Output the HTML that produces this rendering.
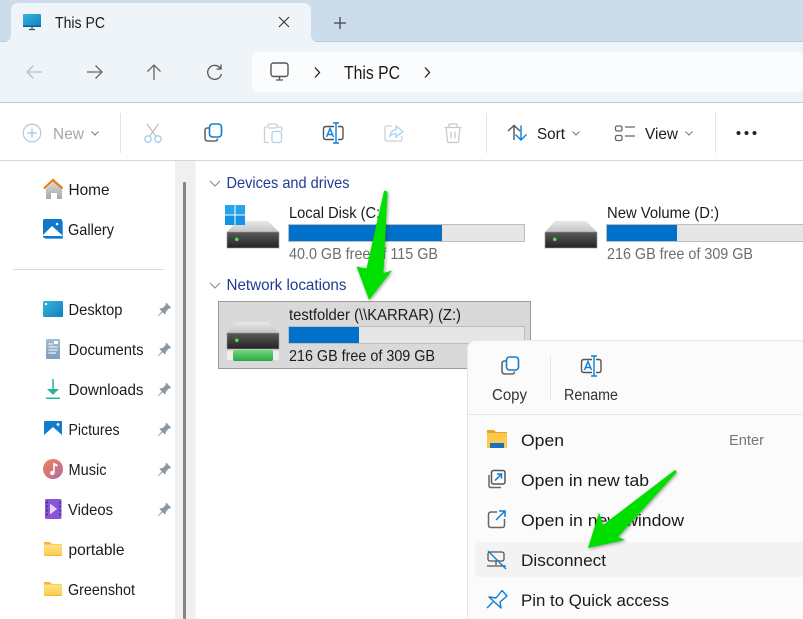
<!DOCTYPE html>
<html><head><meta charset="utf-8"><style>
html,body{margin:0;padding:0;background:#fff;width:803px;height:619px;overflow:hidden}
svg{display:block;font-family:"Liberation Sans",sans-serif}
text{fill:#1b1b1b;font-size:16px}
</style></head><body>
<svg width="803" height="619" viewBox="0 0 803 619" xmlns="http://www.w3.org/2000/svg">
<defs>
<linearGradient id="dk" x1="0" y1="0" x2="0" y2="1"><stop offset="0" stop-color="#5a5a5a"/><stop offset="1" stop-color="#232323"/></linearGradient>
<linearGradient id="tp" x1="0" y1="0" x2="0" y2="1"><stop offset="0" stop-color="#e8e8e8"/><stop offset="1" stop-color="#c4c4c4"/></linearGradient>
<linearGradient id="sc" x1="0" y1="0" x2="1" y2="1"><stop offset="0" stop-color="#35b6dc"/><stop offset="1" stop-color="#0f7fc0"/></linearGradient>
<linearGradient id="fd" x1="0" y1="0" x2="0" y2="1"><stop offset="0" stop-color="#ffe28a"/><stop offset="1" stop-color="#fbcb52"/></linearGradient>
<linearGradient id="hm" x1="0" y1="0" x2="0" y2="1"><stop offset="0" stop-color="#d8d8d8"/><stop offset="1" stop-color="#a8a8a8"/></linearGradient>
<linearGradient id="ms" x1="0" y1="0" x2="1" y2="1"><stop offset="0" stop-color="#ee8550"/><stop offset="1" stop-color="#b566a8"/></linearGradient>
<linearGradient id="dc" x1="0" y1="0" x2="0" y2="1"><stop offset="0" stop-color="#a5bdd4"/><stop offset="1" stop-color="#7d9dbd"/></linearGradient>
<linearGradient id="gr" x1="0" y1="0" x2="0" y2="1"><stop offset="0" stop-color="#72d77f"/><stop offset="1" stop-color="#2aa845"/></linearGradient>
<filter id="sh" x="-30%" y="-30%" width="160%" height="160%"><feDropShadow dx="1" dy="1" stdDeviation="1.500" flood-color="#000" flood-opacity=".4"/></filter>
<g id="drive"><path d="M10 0H41L52 11H0Z" fill="url(#tp)"/><rect x="0" y="11" width="52" height="16" fill="url(#dk)" stroke="#9a9a9a" stroke-width=".6"/><rect x="8" y="16.500" width="3.600" height="3.600" rx="1.800" fill="#4fe04f"/></g>
<g id="pin"><g transform="rotate(45) scale(.85)" fill="#8f99a2"><path d="M-.8 2H.8L.4 10H-.4Z"/><path d="M-4-8H4V-6H2.800V-1L5 3H-5L-2.800-1V-6H-4Z"/></g></g>
<g id="copy" fill="none" stroke-width="1.600"><path d="M-4-6H-6.500Q-9-6-9-3.500V4Q-9 7-6 7H1Q3.500 7 3.500 4.500" stroke="#666"/><rect x="-4.500" y="-10" width="12" height="13" rx="3" stroke="#0b7ed6" fill="#fff"/></g>
<g id="ren" fill="none" stroke-width="1.400"><path d="M1-6.500H-7Q-9.500-6.500-9.500-4V4Q-9.500 6.500-7 6.500H1M5-6.500H8Q10-6.500 10-4V4Q10 6.500 8 6.500H5" stroke="#555"/><path d="M3-10V10M0-10H6M0 10H6" stroke="#0b7ed6"/><path d="M-6.500 4L-3-4.500L.5 4M-5.500 1.500H-.5" stroke="#0b7ed6"/></g>
<g id="chev" fill="none" stroke="#777" stroke-width="1"><path d="M-3.500-1.500L0 2L3.500-1.500"/></g>
</defs>

<!-- title bar -->
<rect width="803" height="42" fill="#cbdcea"/>
<rect y="41" width="803" height="1" fill="#b7cadb"/>
<path d="M5 42Q11 41 11 35V11Q11 3 19 3H303Q311 3 311 11V35Q311 41 317 42Z" fill="#eff4f9"/>
<rect x="23" y="14" width="18" height="13" rx="1" fill="url(#sc)"/><rect x="23" y="25.500" width="18" height="1.500" fill="#0d5d8e"/><path d="M29 29.500H35M32 27V29.500" stroke="#32536f" stroke-width="1.200"/>
<text x="55" y="28" style="font-size:16px" textLength="50" lengthAdjust="spacingAndGlyphs">This PC</text>
<path d="M279 17L289 27M289 17L279 27" stroke="#333" stroke-width="1.100"/>
<path d="M340 17V29M334 23H346" stroke="#444" stroke-width="1.300"/>

<!-- nav row -->
<rect y="42" width="803" height="60" fill="#eff4f9"/>
<rect y="102" width="803" height="1" fill="#bccad6"/>
<g fill="none" stroke-width="1.300">
<path d="M42 72H27M33.500 65.500L27 72L33.500 78.500" stroke="#b9bfc4"/>
<path d="M87 72H102M95.500 65.500L102 72L95.500 78.500" stroke="#666"/>
<path d="M154 80V65M147.500 71.500L154 65L160.500 71.500" stroke="#666"/>
<path d="M220.500 68.500A7 7 0 1 0 221.500 74M221 64.500V69H216.500" stroke="#555"/>
</g>
<rect x="252" y="52" width="551" height="40" rx="5" fill="#fbfcfe"/>
<rect x="271" y="63" width="17" height="13.500" rx="2.500" fill="none" stroke="#555" stroke-width="1.400"/><path d="M276 80H283M279.500 77V80" stroke="#555" stroke-width="1.300"/>
<path d="M315 67.500L319.500 72.500L315 77.500M425 67.500L429.500 72.500L425 77.500" fill="none" stroke="#222" stroke-width="1.300"/>
<text x="344" y="79" style="font-size:18px" textLength="56" lengthAdjust="spacingAndGlyphs">This PC</text>

<!-- command bar -->
<circle cx="32" cy="133" r="8.800" fill="none" stroke="#c8c8c8" stroke-width="1.300"/><path d="M32 128.500V137.500M27.500 133H36.500" stroke="#92c5ee" stroke-width="1.200"/>
<text x="53" y="139" style="fill:#a6a6a6" textLength="31" lengthAdjust="spacingAndGlyphs">New</text>
<use href="#chev" x="95" y="133"/>
<rect x="120" y="113" width="1" height="40" fill="#e3e3e3"/>
<g fill="none"><path d="M147 124L156.500 137M158.500 124L149 137" stroke="#bdbdbd" stroke-width="1.200"/><circle cx="148" cy="139" r="3.200" stroke="#9fcdf0" stroke-width="1.300"/><circle cx="158" cy="139" r="3.200" stroke="#9fcdf0" stroke-width="1.300"/></g>
<use href="#copy" x="214" y="134"/>
<g fill="none" stroke-width="1.300"><path d="M267 127H265.500Q264.500 127 264.500 129V141Q264.500 142.500 266 142.500H269M277 127H280Q282 127 282 129V131" stroke="#cfcfcf"/><rect x="268" y="124" width="9" height="4" rx="1.500" stroke="#cfcfcf"/><rect x="272" y="131.500" width="9.500" height="11" rx="2" stroke="#a6d2f2"/></g>
<use href="#ren" x="333" y="133"/>
<g fill="none" stroke-width="1.300"><path d="M392 126H387Q385 126 385 128V139Q385 141 387 141H400Q402 141 402 139V136" stroke="#cfcfcf"/><path d="M390 136Q391 130 396 129.500V126L403 131.500L396 137V133.500Q392 134 390 136Z" stroke="#a6d2f2"/></g>
<g fill="none" stroke="#c9c9c9" stroke-width="1.300"><path d="M444.500 127.500H461.500M449 127V125Q449 124 450 124H456Q457 124 457 125V127M446 128L447.500 141Q447.500 142.500 449 142.500H457Q458.500 142.500 458.500 141L460 128M451 131.500V138.500M455 131.500V138.500"/></g>
<rect x="486" y="113" width="1" height="40" fill="#e3e3e3"/>
<g fill="none" stroke-width="1.400"><path d="M514 140V126M508 131L514 125.500L520 131" stroke="#555"/><path d="M521 125.500V140M515.500 134.500L521 140L526.500 134.500" stroke="#0b7ed6"/></g>
<text x="537" y="139" textLength="28" lengthAdjust="spacingAndGlyphs">Sort</text>
<use href="#chev" x="576" y="133"/>
<g fill="none" stroke="#666" stroke-width="1.300"><rect x="615.500" y="126" width="6.500" height="5" rx="1.500"/><rect x="615.500" y="135.500" width="6.500" height="5" rx="1.500"/><path d="M625 127H635M625 136H635"/></g>
<text x="645" y="139" textLength="33" lengthAdjust="spacingAndGlyphs">View</text>
<use href="#chev" x="689" y="133"/>
<rect x="715" y="113" width="1" height="40" fill="#e3e3e3"/>
<circle cx="738.500" cy="133" r="2" fill="#222"/><circle cx="746.500" cy="133" r="2" fill="#222"/><circle cx="754.500" cy="133" r="2" fill="#222"/>
<rect y="160" width="803" height="1" fill="#c8d8e6"/>

<!-- sidebar -->
<rect x="175" y="161" width="20" height="458" fill="#f0f0f0"/>
<rect x="195" y="161" width="1" height="458" fill="#f7f7f7"/>
<rect x="183" y="182" width="3" height="437" rx="1" fill="#858585"/>
<path d="M46 189V199H51V193H57V199H62V189L54 181Z" fill="url(#hm)"/><path d="M44 188.500L53 180L62.500 188.500" fill="none" stroke="#e87a1a" stroke-width="2.200"/>
<text x="68.500" y="195" textLength="41" lengthAdjust="spacingAndGlyphs">Home</text>
<rect x="45" y="221" width="18" height="18" rx="1" fill="#5aa4df"/><rect x="43" y="219" width="19" height="19" rx="1.500" fill="#0f78cc"/><path d="M43 235L52 226L62 235V236H43Z" fill="#fff"/><circle cx="57" cy="224" r="1.300" fill="#fff"/>
<text x="68" y="235" textLength="46" lengthAdjust="spacingAndGlyphs">Gallery</text>
<rect x="13" y="269" width="151" height="1" fill="#dbdbdb"/>

<rect x="43" y="301" width="20" height="16" rx="1" fill="url(#sc)"/><rect x="45" y="303" width="2" height="2" fill="#fff"/>
<text x="68.500" y="315" textLength="54" lengthAdjust="spacingAndGlyphs">Desktop</text>
<use href="#pin" x="164" y="310"/>
<rect x="46" y="339" width="14" height="20" rx="1" fill="url(#dc)"/><path d="M48.500 344H53M48.500 347H57.500M48.500 350H57.500M48.500 353H56" stroke="#fff" stroke-width=".9"/><rect x="54" y="341" width="4" height="3" fill="#fff"/>
<text x="68.500" y="355" textLength="75" lengthAdjust="spacingAndGlyphs">Documents</text>
<use href="#pin" x="164" y="350"/>
<path d="M53 379V392" stroke="#31b8a0" stroke-width="1.600"/><path d="M47 389H59L53 395Z" fill="#25b795"/><rect x="46" y="397.500" width="14" height="1.500" fill="#25b795"/>
<text x="68.500" y="395" textLength="75" lengthAdjust="spacingAndGlyphs">Downloads</text>
<use href="#pin" x="164" y="390"/>
<rect x="44" y="421" width="18" height="17.500" rx="1" fill="#0f7ccc"/><path d="M44 435L53 427L62 435V438.500H44Z" fill="#fff"/><circle cx="58" cy="424.500" r="1.400" fill="#fff"/>
<text x="68.500" y="435" textLength="51" lengthAdjust="spacingAndGlyphs">Pictures</text>
<use href="#pin" x="164" y="430"/>
<circle cx="53" cy="469" r="10" fill="url(#ms)"/><path d="M54 463V472.500" stroke="#fff" stroke-width="1.600"/><circle cx="52.300" cy="473" r="2.200" fill="#fff"/><path d="M54 463L57.500 464.500V466.500L54 465.500Z" fill="#fff"/>
<text x="68.500" y="475" textLength="38" lengthAdjust="spacingAndGlyphs">Music</text>
<use href="#pin" x="164" y="470"/>
<rect x="45" y="499" width="16.500" height="20" rx="1.500" fill="#8a54d8"/><path d="M50 503.500V514.500L57 509Z" fill="#e4d8fa"/><path d="M47 501.500V517.500M60 501.500V517.500" stroke="#3d2a78" stroke-width="1.500" stroke-dasharray="2 2"/>
<text x="68" y="515" textLength="45" lengthAdjust="spacingAndGlyphs">Videos</text>
<use href="#pin" x="164" y="510"/>
<path d="M44 542H50L52 544H62V556H44Z" fill="#f4b92e"/><rect x="44" y="544.500" width="18" height="10.500" fill="url(#fd)"/>
<text x="68.500" y="555" textLength="56" lengthAdjust="spacingAndGlyphs">portable</text>
<path d="M44 582H50L52 584H62V596H44Z" fill="#f4b92e"/><rect x="44" y="584.500" width="18" height="10.500" fill="url(#fd)"/>
<text x="68" y="595" textLength="67" lengthAdjust="spacingAndGlyphs">Greenshot</text>

<!-- content -->
<path d="M210 181L215 186L220 181M210 283L215 288L220 283" fill="none" stroke="#888" stroke-width="1"/>
<text x="226.500" y="188" style="fill:#1f3a93" textLength="123" lengthAdjust="spacingAndGlyphs">Devices and drives</text>
<text x="226.500" y="290" style="fill:#1f3a93" textLength="120" lengthAdjust="spacingAndGlyphs">Network locations</text>

<use href="#drive" x="227" y="221"/>
<rect x="225" y="205" width="9.500" height="9.500" fill="#27a3ea"/><rect x="235.500" y="205" width="9.500" height="9.500" fill="#27a3ea"/><rect x="225" y="215.500" width="9.500" height="9.500" fill="#1394e5"/><rect x="235.500" y="215.500" width="9.500" height="9.500" fill="#1394e5"/>
<text x="289" y="218" textLength="96" lengthAdjust="spacingAndGlyphs">Local Disk (C:)</text>
<rect x="288.500" y="224.500" width="236" height="17" fill="#e6e6e6" stroke="#bcbcbc"/><rect x="289" y="225" width="153" height="16" fill="#0070c8"/>
<text x="289" y="259" style="fill:#6d6d6d" textLength="149" lengthAdjust="spacingAndGlyphs">40.0 GB free of 115 GB</text>

<use href="#drive" x="545" y="221"/>
<text x="607" y="218" textLength="112" lengthAdjust="spacingAndGlyphs">New Volume (D:)</text>
<rect x="606.500" y="224.500" width="200" height="17" fill="#e6e6e6" stroke="#bcbcbc"/><rect x="607" y="225" width="70" height="16" fill="#0070c8"/>
<text x="607" y="259" style="fill:#6d6d6d" textLength="146" lengthAdjust="spacingAndGlyphs">216 GB free of 309 GB</text>

<rect x="218.500" y="301.500" width="312" height="67" fill="#d9d9d9" stroke="#9a9a9a"/>
<use href="#drive" x="227" y="322"/>
<rect x="227" y="351" width="52" height="9" fill="#efefef" rx="2"/><rect x="233" y="350" width="40" height="11" fill="url(#gr)" rx="2"/>
<text x="289" y="320" textLength="172" lengthAdjust="spacingAndGlyphs">testfolder (\\KARRAR) (Z:)</text>
<rect x="288.500" y="326.500" width="236" height="17" fill="#e6e6e6" stroke="#bcbcbc"/><rect x="289" y="327" width="70" height="16" fill="#0070c8"/>
<text x="289" y="361" textLength="146" lengthAdjust="spacingAndGlyphs">216 GB free of 309 GB</text>

<!-- context menu -->
<rect x="467.500" y="340.500" width="350" height="300" rx="8" fill="#fbfbfb" stroke="#e6e6e6"/>
<use href="#copy" x="511" y="367"/>
<text x="492" y="400" style="font-size:15.500px;fill:#333" textLength="35" lengthAdjust="spacingAndGlyphs">Copy</text>
<rect x="550" y="355" width="1" height="45" fill="#e8e8e8"/>
<use href="#ren" x="591" y="366"/>
<text x="564" y="400" style="font-size:15.500px;fill:#333" textLength="54" lengthAdjust="spacingAndGlyphs">Rename</text>
<rect x="468" y="414" width="335" height="1" fill="#e6e6e6"/>

<path d="M487 430H494L496 432H507V448H487Z" fill="#eaa520"/><rect x="487" y="433" width="20" height="15" fill="#fbc94e"/><rect x="490" y="443" width="14" height="5" fill="#1a6fc0"/>
<text x="521" y="446" style="font-size:17px" textLength="43" lengthAdjust="spacingAndGlyphs">Open</text>
<text x="729" y="445" style="font-size:15px;fill:#777" textLength="35" lengthAdjust="spacingAndGlyphs">Enter</text>
<g fill="none" stroke-width="1.500"><path d="M489 475V486Q489 487.500 491 487.500H501" stroke="#666"/><rect x="491.500" y="470.500" width="13.500" height="13.500" rx="2" stroke="#555"/><path d="M495 480.500L501.500 474M497 474H501.500V478.500" stroke="#0b7ed6"/></g>
<text x="521" y="486" style="font-size:17px" textLength="128" lengthAdjust="spacingAndGlyphs">Open in new tab</text>
<g fill="none" stroke-width="1.500"><path d="M497 512H491Q488.500 512 488.500 514.500V525Q488.500 527.500 491 527.500H502Q504.500 527.500 504.500 525V519" stroke="#666"/><path d="M496 520L505 511M499 511H505V517" stroke="#0b7ed6"/></g>
<text x="521" y="526" style="font-size:17px" textLength="163" lengthAdjust="spacingAndGlyphs">Open in new window</text>
<rect x="475" y="542" width="340" height="35" rx="5" fill="#f3f3f3"/>
<g fill="none" stroke-width="1.300"><rect x="488" y="552" width="16" height="9" rx="2" stroke="#555"/><path d="M496 561V565M487 566H506" stroke="#555"/><path d="M488 551L506 569" stroke="#0b7ed6"/></g>
<text x="521" y="566" style="font-size:17px" textLength="85" lengthAdjust="spacingAndGlyphs">Disconnect</text>
<path d="M487 608L493 602M489 597L496 598L502 590.500L507 596L500 602L501 608Z" fill="none" stroke="#0b7ed6" stroke-width="1.400" stroke-linejoin="round"/>
<text x="521" y="606" style="font-size:17px" textLength="148" lengthAdjust="spacingAndGlyphs">Pin to Quick access</text>

<!-- arrows -->
<path d="M384 191Q387 190 387.500 193L383.500 273L392 270.500L369 300L356.500 266.500L366.500 268.500Z" fill="#00e000" filter="url(#sh)"/>
<path d="M675 470Q677 471 676 473L618 537L625 540L588 548L599 512.500L603 525Z" fill="#00de00" filter="url(#sh)"/>
</svg>
</body></html>
